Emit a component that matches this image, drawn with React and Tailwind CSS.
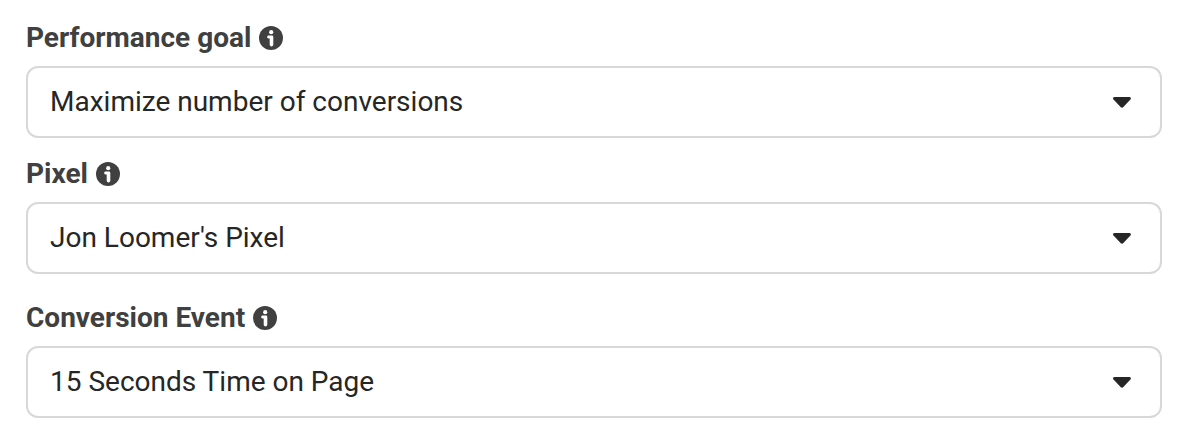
import React from 'react';

const InfoIcon = () => (
    <svg width="24" height="24" viewBox="0 0 24 24" className="shrink-0">
        <circle cx="12" cy="12" r="12" fill="#404040" />
        <circle cx="12.2" cy="6.2" r="2.1" fill="#fff" />
        <path d="M9.6 9.6h3.2c.9 0 1.500.6 1.500 1.500v7.500c0 1.100-.7 1.900-1.800 1.900s-1.800-.8-1.800-1.900v-6.200H9.600c-.9 0-1.400-.6-1.400-1.400s.5-1.400 1.400-1.400z" fill="#fff" />
    </svg>
);

const Caret = () => (
    <svg width="20" height="12" viewBox="0 0 20 12" className="shrink-0">
        <path d="M2.500 1h14.900c1.500 0 1.900 1.500 1 2.500l-7 7.600c-.9.9-1.900.9-2.800 0L1.500 3.500c-.9-1-.5-2.500 1-2.500z" fill="#262626" />
    </svg>
);

const SelectField = ({ label, value, className = '' }) => (
    <div className={className}>
        <div className="flex h-6 items-center gap-2">
            <span className="text-[28px] leading-6 font-bold text-[#404040]">{label}</span>
            <InfoIcon />
        </div>
        <button
            type="button"
            className="mt-4 flex h-[72px] w-[1136px] items-center justify-between rounded-xl border-2 border-[#d8d8d8] bg-white pr-7 pl-[22px] text-left"
        >
            <span className="text-[28px] leading-8 text-[#262626]">{value}</span>
            <Caret />
        </button>
    </div>
);

export default function App() {
    return (
        <main className="h-[438px] w-[1182px] bg-white pt-[26px] pl-[26px] font-['Roboto',sans-serif]">
            <SelectField label="Performance goal" value="Maximize number of conversions" />
            <SelectField label="Pixel" value="Jon Loomer's Pixel" className="mt-6" />
            <SelectField label="Conversion Event" value="15 Seconds Time on Page" className="mt-8" />
        </main>
    );
}
